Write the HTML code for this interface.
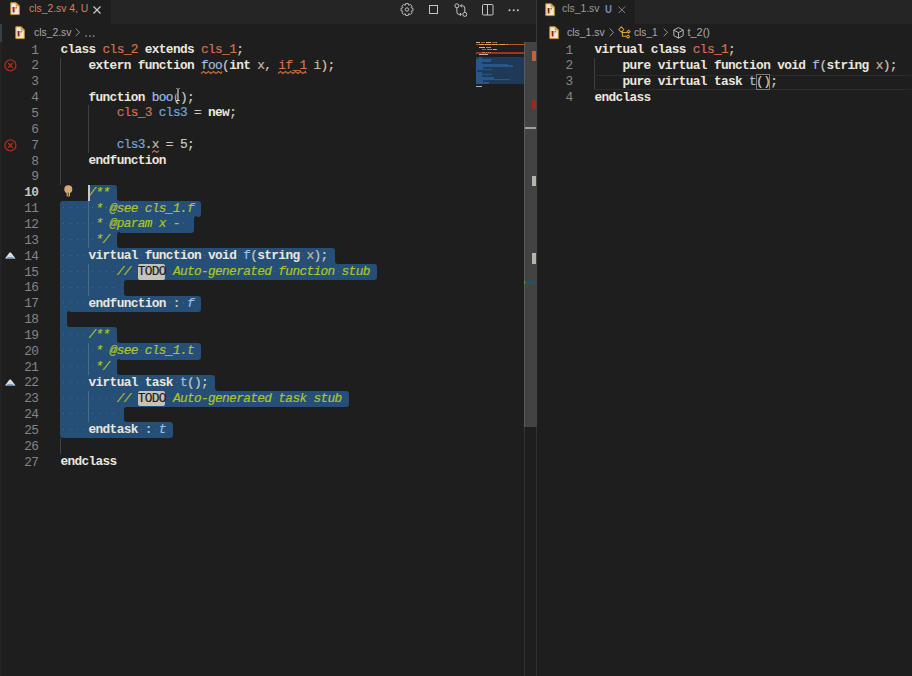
<!DOCTYPE html>
<html><head><meta charset="utf-8">
<style>
*{margin:0;padding:0;box-sizing:border-box}
html,body{width:912px;height:676px;overflow:hidden;background:#1e1e1e}
body{position:relative;font-family:"Liberation Sans",sans-serif}
.abs{position:absolute}
svg{position:absolute;overflow:visible}
.tabbar{position:absolute;top:0;height:23.9px;background:#252526}
.tab{position:absolute;top:0;height:23.9px;background:#1e1e1e}
.ui{position:absolute;transform-origin:0 0;font-family:"Liberation Sans",sans-serif;font-size:10.9px;white-space:pre;line-height:12px}
.code{position:absolute;-webkit-text-stroke:0.2px currentColor;font-family:"Liberation Mono",monospace;font-size:12.8px;letter-spacing:-0.65px;white-space:pre;line-height:15.85px;height:15.85px;color:#d4d4d4}
.ln{position:absolute;font-family:"Liberation Mono",monospace;font-size:12.8px;letter-spacing:-0.65px;line-height:15.85px;text-align:right;color:#858585;width:30px}
.ln.cur{color:#c6c6c6;font-weight:bold}
.ln.rcur{color:#c6c6c6}
.k{font-weight:bold;color:#ece6dc;-webkit-text-stroke:0}
.t{color:#d4704c}
.fn{color:#9cbfe2}
.v{color:#c8b89c}
.id{color:#74a6d8}
.p{color:#cfc8b8}
.c{color:#aec428;font-style:italic}
.fi{color:#9cbfe2;font-style:italic}
.todo{color:#1e1e1e}
.br{color:#cfc8b8}
.sel{position:absolute;background:#264f78}
.guide{position:absolute;width:1px;background:#404040}
.guide.gs{background:#4a6a8c}
.todo-bg{position:absolute;background:#c6c3bd;border-radius:2px}
.ws{position:absolute;width:1px;height:1px;background:#46688e}
</style></head><body>

<!-- LEFT GROUP -->
<div class="tabbar" style="left:0;width:536px"></div>
<div class="tab" style="left:0;width:111px"></div>
<div class="abs" style="left:536px;top:0;width:1px;height:676px;background:#3a3a3a"></div>
<div class="abs" style="left:0;top:23.9px;width:1.6px;height:18.1px;background:#3a3e46"></div>
<div class="abs" style="left:0;top:42px;width:2px;height:634px;background:#232323"></div>

<!-- left tab -->
<svg style="left:10.2px;top:2.3px" width="10" height="13" viewBox="0 0 10 13"><path d="M0.8,0.8 H6.1 L9.3,4.0 V12.6 H0.8 Z" fill="#f4ead4" stroke="#c99035" stroke-width="1"/><path d="M6.1,0.8 V4 H9.3 Z" fill="#dcb060" stroke="#c99035" stroke-width="0.7"/><path d="M2.5,5.1 H4.5 V10.4 H2.8 Z" fill="#8e1d12"/><path d="M5.4,5.3 H7.3 L6.5,6.5 H5.4 Z" fill="#c0392b"/><path d="M6.1,6.5 L4.9,10.2" stroke="#dcc2a4" stroke-width="0.6"/></svg>
<div class="ui" style="left:29px;top:1.5px;color:#d7825a;transform:scaleX(0.95)">cls_2.sv 4, U</div>
<svg style="left:93px;top:5.5px" width="8" height="8" viewBox="0 0 8 8"><path d="M0.5,0.5 L7.5,7.5 M7.5,0.5 L0.5,7.5" stroke="#c9d2da" stroke-width="1.1"/></svg>

<!-- toolbar icons -->
<svg style="left:400px;top:3px" width="14" height="13" viewBox="0 0 14 13"><g fill="none" stroke="#c5c5c5" stroke-width="0.95"><path d="M11.31,4.88 L12.98,5.29 L12.98,7.71 L11.31,8.12 L11.19,8.40 L12.08,9.87 L10.37,11.58 L8.90,10.69 L8.62,10.81 L8.21,12.48 L5.79,12.48 L5.38,10.81 L5.10,10.69 L3.63,11.58 L1.92,9.87 L2.81,8.40 L2.69,8.12 L1.02,7.71 L1.02,5.29 L2.69,4.88 L2.81,4.60 L1.92,3.13 L3.63,1.42 L5.10,2.31 L5.38,2.19 L5.79,0.52 L8.21,0.52 L8.62,2.19 L8.90,2.31 L10.37,1.42 L12.08,3.13 L11.19,4.60 Z"/><circle cx="7" cy="6.5" r="1.7"/></g></svg>
<svg style="left:428px;top:4px" width="11" height="11" viewBox="0 0 11 11"><rect x="1.5" y="1.5" width="8" height="8" fill="none" stroke="#c5c5c5" stroke-width="1"/></svg>
<svg style="left:453.5px;top:2.8px" width="15" height="15" viewBox="0 0 15 15"><g fill="none" stroke="#c5c5c5" stroke-width="1"><circle cx="2.9" cy="2.8" r="2"/><circle cx="10.8" cy="11.4" r="2"/><path d="M2.9,4.8 V9.2 Q2.9,11.4 5.2,11.4 H7.2 M5.9,9.9 L7.4,11.4 L5.9,12.9"/><path d="M10.8,9.4 V5 Q10.8,2.8 8.5,2.8 H6.6 M7.9,1.3 L6.4,2.8 L7.9,4.3"/></g></svg>
<svg style="left:481px;top:2.5px" width="13" height="13" viewBox="0 0 13 13"><g fill="none" stroke="#c5c5c5" stroke-width="1"><rect x="1.5" y="1.5" width="10.5" height="10.5" rx="1"/><path d="M6.5,1.5 V12"/></g></svg>
<svg style="left:508px;top:8.5px" width="12" height="3" viewBox="0 0 12 3"><g fill="#c5c5c5"><circle cx="1.5" cy="1.2" r="1"/><circle cx="5.7" cy="1.2" r="1"/><circle cx="9.9" cy="1.2" r="1"/></g></svg>

<!-- left breadcrumb -->
<svg style="left:15px;top:26px" width="10" height="13" viewBox="0 0 10 13"><path d="M0.8,0.8 H6.1 L9.3,4.0 V12.6 H0.8 Z" fill="#f4ead4" stroke="#c99035" stroke-width="1"/><path d="M6.1,0.8 V4 H9.3 Z" fill="#dcb060" stroke="#c99035" stroke-width="0.7"/><path d="M2.5,5.1 H4.5 V10.4 H2.8 Z" fill="#8e1d12"/><path d="M5.4,5.3 H7.3 L6.5,6.5 H5.4 Z" fill="#c0392b"/><path d="M6.1,6.5 L4.9,10.2" stroke="#dcc2a4" stroke-width="0.6"/></svg>
<div class="ui" style="left:33.5px;top:25.5px;color:#a9a9a9;transform:scaleX(0.95)">cls_2.sv</div>
<svg style="left:75px;top:28.4px" width="6" height="9" viewBox="0 0 6 9"><path d="M0.7,0.6 L4.6,4.3 L0.7,8" fill="none" stroke="#a0a0a0" stroke-width="0.9"/></svg>
<svg style="left:84.5px;top:34.7px" width="11" height="2" viewBox="0 0 11 2"><g fill="#9a9a9a"><circle cx="1.2" cy="1" r="0.85"/><circle cx="4.9" cy="1" r="0.85"/><circle cx="8.6" cy="1" r="0.85"/></g></svg>

<!-- RIGHT GROUP -->
<div class="tabbar" style="left:537px;width:375px"></div>
<div class="tab" style="left:537px;width:97.5px"></div>
<svg style="left:544.5px;top:2.5px" width="10" height="13" viewBox="0 0 10 13"><path d="M0.8,0.8 H6.1 L9.3,4.0 V12.6 H0.8 Z" fill="#f4ead4" stroke="#c99035" stroke-width="1"/><path d="M6.1,0.8 V4 H9.3 Z" fill="#dcb060" stroke="#c99035" stroke-width="0.7"/><path d="M2.5,5.1 H4.5 V10.4 H2.8 Z" fill="#8e1d12"/><path d="M5.4,5.3 H7.3 L6.5,6.5 H5.4 Z" fill="#c0392b"/><path d="M6.1,6.5 L4.9,10.2" stroke="#dcc2a4" stroke-width="0.6"/></svg>
<div class="ui" style="left:562px;top:1.5px;color:#9a9a9a;transform:scaleX(0.95)">cls_1.sv</div>
<div class="ui" style="left:605px;top:3.4px;color:#7390ae;font-weight:bold;transform:scale(0.88,0.96)">U</div>
<svg style="left:618px;top:6px" width="8" height="8" viewBox="0 0 8 8"><path d="M0.6,0.6 L7,7 M7,0.6 L0.6,7" stroke="#8a8a8a" stroke-width="0.95"/></svg>

<!-- right breadcrumb -->
<svg style="left:549px;top:26px" width="10" height="13" viewBox="0 0 10 13"><path d="M0.8,0.8 H6.1 L9.3,4.0 V12.6 H0.8 Z" fill="#f4ead4" stroke="#c99035" stroke-width="1"/><path d="M6.1,0.8 V4 H9.3 Z" fill="#dcb060" stroke="#c99035" stroke-width="0.7"/><path d="M2.5,5.1 H4.5 V10.4 H2.8 Z" fill="#8e1d12"/><path d="M5.4,5.3 H7.3 L6.5,6.5 H5.4 Z" fill="#c0392b"/><path d="M6.1,6.5 L4.9,10.2" stroke="#dcc2a4" stroke-width="0.6"/></svg>
<div class="ui" style="left:567px;top:25.5px;color:#a9a9a9;transform:scaleX(0.96)">cls_1.sv</div>
<svg style="left:609px;top:28.2px" width="6" height="9" viewBox="0 0 6 9"><path d="M0.7,0.6 L4.6,4.4 L0.7,8.2" fill="none" stroke="#a0a0a0" stroke-width="0.9"/></svg>
<svg style="left:618px;top:26px" width="13" height="13" viewBox="0 0 13 13"><g fill="none" stroke="#dca03a" stroke-width="1.05" stroke-linejoin="round"><path d="M3.3,0.9 L5.9,3.5 L3.3,6.1 L0.7,3.5 Z"/><path d="M10.6,4.1 L12.1,5.6 L10.6,7.1 L9.1,5.6 Z"/><path d="M10,9 L11.6,10.6 L10,12.2 L8.4,10.6 Z"/><path d="M4.6,6.5 H9.3 M4.4,5.2 V10.3 H8.4"/></g></svg>
<div class="ui" style="left:633.5px;top:25.5px;color:#a9a9a9;transform:scaleX(0.93)">cls_1</div>
<svg style="left:662.5px;top:28.2px" width="6" height="9" viewBox="0 0 6 9"><path d="M0.7,0.6 L4.6,4.4 L0.7,8.2" fill="none" stroke="#a0a0a0" stroke-width="0.9"/></svg>
<svg style="left:672.5px;top:27px" width="11" height="12" viewBox="0 0 11 12"><g fill="none" stroke="#b4b4b4" stroke-width="1"><path d="M5.5,0.6 L10.2,3 V8.6 L5.5,11.2 L0.8,8.6 V3 Z M0.8,3 L5.5,5.6 L10.2,3 M5.5,5.6 V11.2"/></g></svg>
<div class="ui" style="left:687.5px;top:25.5px;color:#a9a9a9">t_2()</div>


<div class="sel" style="left:88.52px;top:184.65px;width:28.12px;height:16.55px;border-radius:3.0px 3.0px 0px 0px"></div>
<div class="abs" style="left:116.64px;top:197.50px;width:3.0px;height:3.0px;background:#264f78"></div>
<div class="abs" style="left:116.64px;top:197.50px;width:3.0px;height:3.0px;background:#1e1e1e;border-radius:0 0 0 3.0px"></div>
<div class="abs" style="left:85.52px;top:197.50px;width:3.0px;height:3.0px;background:#264f78"></div>
<div class="abs" style="left:85.52px;top:197.50px;width:3.0px;height:3.0px;background:#1e1e1e;border-radius:0 0 3.0px 0"></div>
<div class="sel" style="left:60.40px;top:200.50px;width:140.60px;height:16.55px;border-radius:3.0px 3.0px 3.0px 0px"></div>
<div class="sel" style="left:60.40px;top:216.35px;width:133.57px;height:16.55px;border-radius:0px 0px 3.0px 0px"></div>
<div class="abs" style="left:193.97px;top:216.35px;width:3.0px;height:3.0px;background:#264f78"></div>
<div class="abs" style="left:193.97px;top:216.35px;width:3.0px;height:3.0px;background:#1e1e1e;border-radius:3.0px 0 0 0"></div>
<div class="sel" style="left:60.40px;top:232.20px;width:56.24px;height:16.55px;border-radius:0px 0px 0px 0px"></div>
<div class="abs" style="left:116.64px;top:232.20px;width:3.0px;height:3.0px;background:#264f78"></div>
<div class="abs" style="left:116.64px;top:232.20px;width:3.0px;height:3.0px;background:#1e1e1e;border-radius:3.0px 0 0 0"></div>
<div class="abs" style="left:116.64px;top:245.05px;width:3.0px;height:3.0px;background:#264f78"></div>
<div class="abs" style="left:116.64px;top:245.05px;width:3.0px;height:3.0px;background:#1e1e1e;border-radius:0 0 0 3.0px"></div>
<div class="sel" style="left:60.40px;top:248.05px;width:274.17px;height:16.55px;border-radius:0px 3.0px 0px 0px"></div>
<div class="abs" style="left:334.57px;top:260.90px;width:3.0px;height:3.0px;background:#264f78"></div>
<div class="abs" style="left:334.57px;top:260.90px;width:3.0px;height:3.0px;background:#1e1e1e;border-radius:0 0 0 3.0px"></div>
<div class="sel" style="left:60.40px;top:263.90px;width:316.35px;height:16.55px;border-radius:0px 3.0px 3.0px 0px"></div>
<div class="sel" style="left:60.40px;top:279.75px;width:63.27px;height:16.55px;border-radius:0px 0px 0px 0px"></div>
<div class="abs" style="left:123.67px;top:279.75px;width:3.0px;height:3.0px;background:#264f78"></div>
<div class="abs" style="left:123.67px;top:279.75px;width:3.0px;height:3.0px;background:#1e1e1e;border-radius:3.0px 0 0 0"></div>
<div class="abs" style="left:123.67px;top:292.60px;width:3.0px;height:3.0px;background:#264f78"></div>
<div class="abs" style="left:123.67px;top:292.60px;width:3.0px;height:3.0px;background:#1e1e1e;border-radius:0 0 0 3.0px"></div>
<div class="sel" style="left:60.40px;top:295.60px;width:140.60px;height:16.55px;border-radius:0px 3.0px 3.0px 0px"></div>
<div class="sel" style="left:60.40px;top:311.45px;width:7.03px;height:16.55px;border-radius:0px 0px 0px 0px"></div>
<div class="abs" style="left:67.43px;top:311.45px;width:3.0px;height:3.0px;background:#264f78"></div>
<div class="abs" style="left:67.43px;top:311.45px;width:3.0px;height:3.0px;background:#1e1e1e;border-radius:3.0px 0 0 0"></div>
<div class="abs" style="left:67.43px;top:324.30px;width:3.0px;height:3.0px;background:#264f78"></div>
<div class="abs" style="left:67.43px;top:324.30px;width:3.0px;height:3.0px;background:#1e1e1e;border-radius:0 0 0 3.0px"></div>
<div class="sel" style="left:60.40px;top:327.30px;width:56.24px;height:16.55px;border-radius:0px 3.0px 0px 0px"></div>
<div class="abs" style="left:116.64px;top:340.15px;width:3.0px;height:3.0px;background:#264f78"></div>
<div class="abs" style="left:116.64px;top:340.15px;width:3.0px;height:3.0px;background:#1e1e1e;border-radius:0 0 0 3.0px"></div>
<div class="sel" style="left:60.40px;top:343.15px;width:140.60px;height:16.55px;border-radius:0px 3.0px 3.0px 0px"></div>
<div class="sel" style="left:60.40px;top:359.00px;width:56.24px;height:16.55px;border-radius:0px 0px 0px 0px"></div>
<div class="abs" style="left:116.64px;top:359.00px;width:3.0px;height:3.0px;background:#264f78"></div>
<div class="abs" style="left:116.64px;top:359.00px;width:3.0px;height:3.0px;background:#1e1e1e;border-radius:3.0px 0 0 0"></div>
<div class="abs" style="left:116.64px;top:371.85px;width:3.0px;height:3.0px;background:#264f78"></div>
<div class="abs" style="left:116.64px;top:371.85px;width:3.0px;height:3.0px;background:#1e1e1e;border-radius:0 0 0 3.0px"></div>
<div class="sel" style="left:60.40px;top:374.85px;width:154.66px;height:16.55px;border-radius:0px 3.0px 0px 0px"></div>
<div class="abs" style="left:215.06px;top:387.70px;width:3.0px;height:3.0px;background:#264f78"></div>
<div class="abs" style="left:215.06px;top:387.70px;width:3.0px;height:3.0px;background:#1e1e1e;border-radius:0 0 0 3.0px"></div>
<div class="sel" style="left:60.40px;top:390.70px;width:288.23px;height:16.55px;border-radius:0px 3.0px 3.0px 0px"></div>
<div class="sel" style="left:60.40px;top:406.55px;width:63.27px;height:16.55px;border-radius:0px 0px 0px 0px"></div>
<div class="abs" style="left:123.67px;top:406.55px;width:3.0px;height:3.0px;background:#264f78"></div>
<div class="abs" style="left:123.67px;top:406.55px;width:3.0px;height:3.0px;background:#1e1e1e;border-radius:3.0px 0 0 0"></div>
<div class="abs" style="left:123.67px;top:419.40px;width:3.0px;height:3.0px;background:#264f78"></div>
<div class="abs" style="left:123.67px;top:419.40px;width:3.0px;height:3.0px;background:#1e1e1e;border-radius:0 0 0 3.0px"></div>
<div class="sel" style="left:60.40px;top:422.40px;width:112.48px;height:15.85px;border-radius:0px 3.0px 3.0px 3.0px"></div>
<div class="ws" style="left:63.40px;top:207.30px"></div>
<div class="ws" style="left:70.43px;top:207.30px"></div>
<div class="ws" style="left:77.46px;top:207.30px"></div>
<div class="ws" style="left:84.49px;top:207.30px"></div>
<div class="ws" style="left:91.52px;top:207.30px"></div>
<div class="ws" style="left:105.58px;top:207.30px"></div>
<div class="ws" style="left:140.73px;top:207.30px"></div>
<div class="ws" style="left:63.40px;top:223.15px"></div>
<div class="ws" style="left:70.43px;top:223.15px"></div>
<div class="ws" style="left:77.46px;top:223.15px"></div>
<div class="ws" style="left:84.49px;top:223.15px"></div>
<div class="ws" style="left:91.52px;top:223.15px"></div>
<div class="ws" style="left:105.58px;top:223.15px"></div>
<div class="ws" style="left:154.79px;top:223.15px"></div>
<div class="ws" style="left:168.85px;top:223.15px"></div>
<div class="ws" style="left:182.91px;top:223.15px"></div>
<div class="ws" style="left:63.40px;top:239.00px"></div>
<div class="ws" style="left:70.43px;top:239.00px"></div>
<div class="ws" style="left:77.46px;top:239.00px"></div>
<div class="ws" style="left:84.49px;top:239.00px"></div>
<div class="ws" style="left:91.52px;top:239.00px"></div>
<div class="ws" style="left:63.40px;top:254.85px"></div>
<div class="ws" style="left:70.43px;top:254.85px"></div>
<div class="ws" style="left:77.46px;top:254.85px"></div>
<div class="ws" style="left:84.49px;top:254.85px"></div>
<div class="ws" style="left:140.73px;top:254.85px"></div>
<div class="ws" style="left:204.00px;top:254.85px"></div>
<div class="ws" style="left:239.15px;top:254.85px"></div>
<div class="ws" style="left:302.42px;top:254.85px"></div>
<div class="ws" style="left:63.40px;top:270.70px"></div>
<div class="ws" style="left:70.43px;top:270.70px"></div>
<div class="ws" style="left:77.46px;top:270.70px"></div>
<div class="ws" style="left:84.49px;top:270.70px"></div>
<div class="ws" style="left:91.52px;top:270.70px"></div>
<div class="ws" style="left:98.55px;top:270.70px"></div>
<div class="ws" style="left:105.58px;top:270.70px"></div>
<div class="ws" style="left:112.61px;top:270.70px"></div>
<div class="ws" style="left:133.70px;top:270.70px"></div>
<div class="ws" style="left:168.85px;top:270.70px"></div>
<div class="ws" style="left:274.30px;top:270.70px"></div>
<div class="ws" style="left:337.57px;top:270.70px"></div>
<div class="ws" style="left:63.40px;top:286.55px"></div>
<div class="ws" style="left:70.43px;top:286.55px"></div>
<div class="ws" style="left:77.46px;top:286.55px"></div>
<div class="ws" style="left:84.49px;top:286.55px"></div>
<div class="ws" style="left:91.52px;top:286.55px"></div>
<div class="ws" style="left:98.55px;top:286.55px"></div>
<div class="ws" style="left:105.58px;top:286.55px"></div>
<div class="ws" style="left:112.61px;top:286.55px"></div>
<div class="ws" style="left:63.40px;top:302.40px"></div>
<div class="ws" style="left:70.43px;top:302.40px"></div>
<div class="ws" style="left:77.46px;top:302.40px"></div>
<div class="ws" style="left:84.49px;top:302.40px"></div>
<div class="ws" style="left:168.85px;top:302.40px"></div>
<div class="ws" style="left:182.91px;top:302.40px"></div>
<div class="ws" style="left:63.40px;top:334.10px"></div>
<div class="ws" style="left:70.43px;top:334.10px"></div>
<div class="ws" style="left:77.46px;top:334.10px"></div>
<div class="ws" style="left:84.49px;top:334.10px"></div>
<div class="ws" style="left:63.40px;top:349.95px"></div>
<div class="ws" style="left:70.43px;top:349.95px"></div>
<div class="ws" style="left:77.46px;top:349.95px"></div>
<div class="ws" style="left:84.49px;top:349.95px"></div>
<div class="ws" style="left:91.52px;top:349.95px"></div>
<div class="ws" style="left:105.58px;top:349.95px"></div>
<div class="ws" style="left:140.73px;top:349.95px"></div>
<div class="ws" style="left:63.40px;top:365.80px"></div>
<div class="ws" style="left:70.43px;top:365.80px"></div>
<div class="ws" style="left:77.46px;top:365.80px"></div>
<div class="ws" style="left:84.49px;top:365.80px"></div>
<div class="ws" style="left:91.52px;top:365.80px"></div>
<div class="ws" style="left:63.40px;top:381.65px"></div>
<div class="ws" style="left:70.43px;top:381.65px"></div>
<div class="ws" style="left:77.46px;top:381.65px"></div>
<div class="ws" style="left:84.49px;top:381.65px"></div>
<div class="ws" style="left:140.73px;top:381.65px"></div>
<div class="ws" style="left:175.88px;top:381.65px"></div>
<div class="ws" style="left:63.40px;top:397.50px"></div>
<div class="ws" style="left:70.43px;top:397.50px"></div>
<div class="ws" style="left:77.46px;top:397.50px"></div>
<div class="ws" style="left:84.49px;top:397.50px"></div>
<div class="ws" style="left:91.52px;top:397.50px"></div>
<div class="ws" style="left:98.55px;top:397.50px"></div>
<div class="ws" style="left:105.58px;top:397.50px"></div>
<div class="ws" style="left:112.61px;top:397.50px"></div>
<div class="ws" style="left:133.70px;top:397.50px"></div>
<div class="ws" style="left:168.85px;top:397.50px"></div>
<div class="ws" style="left:274.30px;top:397.50px"></div>
<div class="ws" style="left:309.45px;top:397.50px"></div>
<div class="ws" style="left:63.40px;top:413.35px"></div>
<div class="ws" style="left:70.43px;top:413.35px"></div>
<div class="ws" style="left:77.46px;top:413.35px"></div>
<div class="ws" style="left:84.49px;top:413.35px"></div>
<div class="ws" style="left:91.52px;top:413.35px"></div>
<div class="ws" style="left:98.55px;top:413.35px"></div>
<div class="ws" style="left:105.58px;top:413.35px"></div>
<div class="ws" style="left:112.61px;top:413.35px"></div>
<div class="ws" style="left:63.40px;top:429.20px"></div>
<div class="ws" style="left:70.43px;top:429.20px"></div>
<div class="ws" style="left:77.46px;top:429.20px"></div>
<div class="ws" style="left:84.49px;top:429.20px"></div>
<div class="ws" style="left:140.73px;top:429.20px"></div>
<div class="ws" style="left:154.79px;top:429.20px"></div>
<div class="guide g" style="left:60.00px;top:57.85px;height:126.80px"></div>
<div class="guide g" style="left:60.00px;top:438.25px;height:15.85px"></div>
<div class="guide g" style="left:88.12px;top:105.40px;height:47.55px"></div>
<div class="guide gs" style="left:88.12px;top:200.50px;height:47.55px"></div>
<div class="guide gs" style="left:88.12px;top:263.90px;height:31.70px"></div>
<div class="guide gs" style="left:88.12px;top:343.15px;height:31.70px"></div>
<div class="guide gs" style="left:88.12px;top:390.70px;height:31.70px"></div>
<div class="guide" style="left:593.90px;top:57.85px;height:31.70px"></div>
<div class="todo-bg" style="left:137.53px;top:264.20px;width:27.52px;height:15.45px"></div>
<div class="todo-bg" style="left:137.53px;top:391.00px;width:27.52px;height:15.45px"></div>
<div class="ln" style="left:8.4px;top:42.60px">1</div>
<div class="ln" style="left:8.4px;top:58.45px">2</div>
<div class="ln" style="left:8.4px;top:74.30px">3</div>
<div class="ln" style="left:8.4px;top:90.15px">4</div>
<div class="ln" style="left:8.4px;top:106.00px">5</div>
<div class="ln" style="left:8.4px;top:121.85px">6</div>
<div class="ln" style="left:8.4px;top:137.70px">7</div>
<div class="ln" style="left:8.4px;top:153.55px">8</div>
<div class="ln" style="left:8.4px;top:169.40px">9</div>
<div class="ln cur" style="left:8.4px;top:185.25px">10</div>
<div class="ln" style="left:8.4px;top:201.10px">11</div>
<div class="ln" style="left:8.4px;top:216.95px">12</div>
<div class="ln" style="left:8.4px;top:232.80px">13</div>
<div class="ln" style="left:8.4px;top:248.65px">14</div>
<div class="ln" style="left:8.4px;top:264.50px">15</div>
<div class="ln" style="left:8.4px;top:280.35px">16</div>
<div class="ln" style="left:8.4px;top:296.20px">17</div>
<div class="ln" style="left:8.4px;top:312.05px">18</div>
<div class="ln" style="left:8.4px;top:327.90px">19</div>
<div class="ln" style="left:8.4px;top:343.75px">20</div>
<div class="ln" style="left:8.4px;top:359.60px">21</div>
<div class="ln" style="left:8.4px;top:375.45px">22</div>
<div class="ln" style="left:8.4px;top:391.30px">23</div>
<div class="ln" style="left:8.4px;top:407.15px">24</div>
<div class="ln" style="left:8.4px;top:423.00px">25</div>
<div class="ln" style="left:8.4px;top:438.85px">26</div>
<div class="ln" style="left:8.4px;top:454.70px">27</div>
<div class="code" style="left:60.4px;top:42.00px"><span class="k">class</span> <span class="t">cls_2</span> <span class="k">extends</span> <span class="t">cls_1</span><span class="p">;</span></div>
<div class="code" style="left:60.4px;top:57.85px">    <span class="k">extern</span> <span class="k">function</span> <span class="fn">foo</span><span class="p">(</span><span class="k">int</span> <span class="v">x</span><span class="p">,</span> <span class="t">if_1</span> <span class="v">i</span><span class="p">);</span></div>
<div class="code" style="left:60.4px;top:89.55px">    <span class="k">function</span> <span class="fn">boo</span><span class="p">();</span></div>
<div class="code" style="left:60.4px;top:105.40px">        <span class="t">cls_3</span> <span class="id">cls3</span> <span class="p">=</span> <span class="k">new</span><span class="p">;</span></div>
<div class="code" style="left:60.4px;top:137.10px">        <span class="id">cls3</span><span class="p">.</span><span class="v">x</span> <span class="p">=</span> <span class="p">5;</span></div>
<div class="code" style="left:60.4px;top:152.95px">    <span class="k">endfunction</span></div>
<div class="code" style="left:60.4px;top:184.65px">    <span class="c">/**</span></div>
<div class="code" style="left:60.4px;top:200.50px">     <span class="c">* @see cls_1.f</span></div>
<div class="code" style="left:60.4px;top:216.35px">     <span class="c">* @param x - </span></div>
<div class="code" style="left:60.4px;top:232.20px">     <span class="c">*/</span></div>
<div class="code" style="left:60.4px;top:248.05px">    <span class="k">virtual</span> <span class="k">function</span> <span class="k">void</span> <span class="fn">f</span><span class="p">(</span><span class="k">string</span> <span class="v">x</span><span class="p">);</span></div>
<div class="code" style="left:60.4px;top:263.90px">        <span class="c">// </span><span class="todo">TODO</span><span class="c"> Auto-generated function stub</span></div>
<div class="code" style="left:60.4px;top:279.75px">        </div>
<div class="code" style="left:60.4px;top:295.60px">    <span class="k">endfunction</span><span class="p"> : </span><span class="fi">f</span></div>
<div class="code" style="left:60.4px;top:327.30px">    <span class="c">/**</span></div>
<div class="code" style="left:60.4px;top:343.15px">     <span class="c">* @see cls_1.t</span></div>
<div class="code" style="left:60.4px;top:359.00px">     <span class="c">*/</span></div>
<div class="code" style="left:60.4px;top:374.85px">    <span class="k">virtual</span> <span class="k">task</span> <span class="fn">t</span><span class="p">();</span></div>
<div class="code" style="left:60.4px;top:390.70px">        <span class="c">// </span><span class="todo">TODO</span><span class="c"> Auto-generated task stub</span></div>
<div class="code" style="left:60.4px;top:406.55px">        </div>
<div class="code" style="left:60.4px;top:422.40px">    <span class="k">endtask</span><span class="p"> : </span><span class="fi">t</span></div>
<div class="code" style="left:60.4px;top:454.10px"><span class="k">endclass</span></div>
<svg style="left:201.00px;top:70.75px" width="21.09" height="3" viewBox="0 0 21.09 3"><path d="M0,2.5 L2.50,0.5 L5.00,2.5 L7.50,0.5 L10.00,2.5 L12.50,0.5 L15.00,2.5 L17.50,0.5 L20.00,2.5 L21.09,0.5" fill="none" stroke="#c86c44" stroke-width="1.05"/></svg>
<svg style="left:278.33px;top:70.75px" width="28.12" height="3" viewBox="0 0 28.12 3"><path d="M0,2.5 L2.50,0.5 L5.00,2.5 L7.50,0.5 L10.00,2.5 L12.50,0.5 L15.00,2.5 L17.50,0.5 L20.00,2.5 L22.50,0.5 L25.00,2.5 L27.50,0.5 L28.12,2.5" fill="none" stroke="#c86c44" stroke-width="1.05"/></svg>
<svg style="left:151.79px;top:150.00px" width="7.03" height="3" viewBox="0 0 7.03 3"><path d="M0,2.5 L2.50,0.5 L5.00,2.5 L7.03,0.5" fill="none" stroke="#c86c44" stroke-width="1.05"/></svg>
<svg style="left:3.55px;top:59.45px" width="13" height="13" viewBox="0 0 13 13"><circle cx="6.4" cy="6.4" r="5.5" fill="none" stroke="#aa2e1e" stroke-width="1.3"/><path d="M4.1,4.1 L8.7,8.7 M8.7,4.1 L4.1,8.7" stroke="#aa2e1e" stroke-width="1.4"/></svg>
<svg style="left:3.55px;top:138.70px" width="13" height="13" viewBox="0 0 13 13"><circle cx="6.4" cy="6.4" r="5.5" fill="none" stroke="#aa2e1e" stroke-width="1.3"/><path d="M4.1,4.1 L8.7,8.7 M8.7,4.1 L4.1,8.7" stroke="#aa2e1e" stroke-width="1.4"/></svg>
<svg style="left:4.5px;top:252.15px" width="11" height="7" viewBox="0 0 11 7"><path d="M4.6,0.5 H5.8 L10.5,6.4 H0 Z" fill="#dde7ef"/><path d="M2.2,5.4 H8.2" stroke="#5b8fd0" stroke-width="0.9"/><path d="M4.5,3.4 H6" stroke="#8fb2dc" stroke-width="0.6"/></svg>
<svg style="left:4.5px;top:378.95px" width="11" height="7" viewBox="0 0 11 7"><path d="M4.6,0.5 H5.8 L10.5,6.4 H0 Z" fill="#dde7ef"/><path d="M2.2,5.4 H8.2" stroke="#5b8fd0" stroke-width="0.9"/><path d="M4.5,3.4 H6" stroke="#8fb2dc" stroke-width="0.6"/></svg>
<svg style="left:63.5px;top:185.25px" width="9" height="12" viewBox="0 0 9 12"><circle cx="4.3" cy="4.3" r="4" fill="#d4aa78"/><rect x="2.6" y="7" width="3.4" height="4.6" rx="0.8" fill="#d4aa78"/><path d="M4.3,7.5 V11.2" stroke="#3a3020" stroke-width="0.8"/></svg>
<div class="abs" style="left:88.3px;top:184.85px;width:1.8px;height:15.85px;background:#c8c8c8"></div>
<div class="abs" style="left:175.8px;top:87.6px;width:4.4px;height:13.6px"><div class="abs" style="left:0;top:0;width:4.4px;height:1.6px;background:#d6d6d6;border-radius:1px"></div><div class="abs" style="left:1.2px;top:1.2px;width:2px;height:11.2px;background:#8a8a8a;box-shadow:0 0 0 0.6px #111"></div><div class="abs" style="left:0;top:12px;width:4.4px;height:1.6px;background:#d6d6d6;border-radius:1px"></div></div>
<div class="abs" style="left:593.90px;top:74.60px;width:317.60px;height:15.25px;border-top:1px solid #2c2c2c;border-bottom:1px solid #2c2c2c"></div>
<div class="ln" style="left:542.6px;top:42.60px">1</div>
<div class="ln" style="left:542.6px;top:58.45px">2</div>
<div class="ln" style="left:542.6px;top:74.30px">3</div>
<div class="ln" style="left:542.6px;top:90.15px">4</div>
<div class="abs" style="left:756.09px;top:73.80px;width:14.06px;height:15.85px;border:1px solid #7c7c7c;background:#171717"></div>
<div class="code" style="left:594.4px;top:42.00px"><span class="k">virtual</span> <span class="k">class</span> <span class="t">cls_1</span><span class="p">;</span></div>
<div class="code" style="left:594.4px;top:57.85px">    <span class="k">pure</span> <span class="k">virtual</span> <span class="k">function</span> <span class="k">void</span> <span class="fn">f</span><span class="p">(</span><span class="k">string</span> <span class="v">x</span><span class="p">);</span></div>
<div class="code" style="left:594.4px;top:73.70px">    <span class="k">pure</span> <span class="k">virtual</span> <span class="k">task</span> <span class="fn">t</span><span class="br">(</span><span class="br">)</span><span class="p">;</span></div>
<div class="code" style="left:594.4px;top:89.55px"><span class="k">endclass</span></div>
<div class="abs" style="left:475.50px;top:43.67px;width:48.50px;height:1.67px;background:#b8541e"></div>
<div class="abs" style="left:475.50px;top:52.02px;width:48.50px;height:1.67px;background:#a0321e"></div>
<div class="abs" style="left:475.50px;top:57.03px;width:48.50px;height:26.72px;background:#1e3a58"></div>
<div class="abs" style="left:478.84px;top:57.03px;width:3.34px;height:1.67px;background:#29568a"></div>
<div class="abs" style="left:475.50px;top:58.70px;width:16.68px;height:1.67px;background:#29568a"></div>
<div class="abs" style="left:475.50px;top:60.37px;width:15.85px;height:1.67px;background:#29568a"></div>
<div class="abs" style="left:475.50px;top:62.04px;width:6.67px;height:1.67px;background:#29568a"></div>
<div class="abs" style="left:475.50px;top:63.71px;width:32.53px;height:1.67px;background:#29568a"></div>
<div class="abs" style="left:475.50px;top:65.38px;width:37.53px;height:1.67px;background:#29568a"></div>
<div class="abs" style="left:475.50px;top:67.05px;width:7.51px;height:1.67px;background:#29568a"></div>
<div class="abs" style="left:475.50px;top:68.72px;width:16.68px;height:1.67px;background:#29568a"></div>
<div class="abs" style="left:475.50px;top:70.39px;width:0.83px;height:1.67px;background:#29568a"></div>
<div class="abs" style="left:475.50px;top:72.06px;width:6.67px;height:1.67px;background:#29568a"></div>
<div class="abs" style="left:475.50px;top:73.73px;width:16.68px;height:1.67px;background:#29568a"></div>
<div class="abs" style="left:475.50px;top:75.40px;width:6.67px;height:1.67px;background:#29568a"></div>
<div class="abs" style="left:475.50px;top:77.07px;width:18.35px;height:1.67px;background:#29568a"></div>
<div class="abs" style="left:475.50px;top:78.74px;width:34.19px;height:1.67px;background:#29568a"></div>
<div class="abs" style="left:475.50px;top:80.41px;width:7.51px;height:1.67px;background:#29568a"></div>
<div class="abs" style="left:475.50px;top:82.08px;width:13.34px;height:1.67px;background:#29568a"></div>
<div class="abs" style="left:475.50px;top:42.20px;width:4.17px;height:1.27px;background:#b8b2a8"></div>
<div class="abs" style="left:480.50px;top:42.20px;width:4.17px;height:1.27px;background:#b05a3a"></div>
<div class="abs" style="left:485.51px;top:42.20px;width:5.84px;height:1.27px;background:#b8b2a8"></div>
<div class="abs" style="left:492.18px;top:42.20px;width:4.17px;height:1.27px;background:#b05a3a"></div>
<div class="abs" style="left:496.35px;top:42.20px;width:0.83px;height:1.27px;background:#9a9a9a"></div>
<div class="abs" style="left:478.84px;top:43.87px;width:5.00px;height:1.27px;background:#e8a040"></div>
<div class="abs" style="left:484.67px;top:43.87px;width:6.67px;height:1.27px;background:#e8a040"></div>
<div class="abs" style="left:492.18px;top:43.87px;width:2.50px;height:1.27px;background:#e8a040"></div>
<div class="abs" style="left:494.68px;top:43.87px;width:0.83px;height:1.27px;background:#d88a40"></div>
<div class="abs" style="left:495.52px;top:43.87px;width:2.50px;height:1.27px;background:#e8a040"></div>
<div class="abs" style="left:498.85px;top:43.87px;width:0.83px;height:1.27px;background:#d88a40"></div>
<div class="abs" style="left:499.69px;top:43.87px;width:0.83px;height:1.27px;background:#d88a40"></div>
<div class="abs" style="left:501.35px;top:43.87px;width:3.34px;height:1.27px;background:#e8a040"></div>
<div class="abs" style="left:505.52px;top:43.87px;width:0.83px;height:1.27px;background:#d88a40"></div>
<div class="abs" style="left:506.36px;top:43.87px;width:1.67px;height:1.27px;background:#d88a40"></div>
<div class="abs" style="left:478.84px;top:47.21px;width:6.67px;height:1.27px;background:#b8b2a8"></div>
<div class="abs" style="left:486.34px;top:47.21px;width:2.50px;height:1.27px;background:#7d93a8"></div>
<div class="abs" style="left:488.84px;top:47.21px;width:2.50px;height:1.27px;background:#9a9a9a"></div>
<div class="abs" style="left:482.17px;top:48.88px;width:4.17px;height:1.27px;background:#b05a3a"></div>
<div class="abs" style="left:487.18px;top:48.88px;width:3.34px;height:1.27px;background:#6a8eb0"></div>
<div class="abs" style="left:491.35px;top:48.88px;width:0.83px;height:1.27px;background:#9a9a9a"></div>
<div class="abs" style="left:493.01px;top:48.88px;width:2.50px;height:1.27px;background:#b8b2a8"></div>
<div class="abs" style="left:495.52px;top:48.88px;width:0.83px;height:1.27px;background:#9a9a9a"></div>
<div class="abs" style="left:482.17px;top:52.22px;width:3.34px;height:1.27px;background:#d08050"></div>
<div class="abs" style="left:485.51px;top:52.22px;width:0.83px;height:1.27px;background:#d08050"></div>
<div class="abs" style="left:486.34px;top:52.22px;width:0.83px;height:1.27px;background:#d08050"></div>
<div class="abs" style="left:488.01px;top:52.22px;width:0.83px;height:1.27px;background:#d08050"></div>
<div class="abs" style="left:489.68px;top:52.22px;width:1.67px;height:1.27px;background:#d08050"></div>
<div class="abs" style="left:478.84px;top:53.89px;width:9.17px;height:1.27px;background:#b8b2a8"></div>
<div class="abs" style="left:475.50px;top:85.62px;width:6.67px;height:1.27px;background:#b8b2a8"></div>
<div class="abs" style="left:524px;top:42px;width:1px;height:634px;background:#36312f"></div>
<div class="abs" style="left:535.6px;top:42px;width:1px;height:634px;background:#303030"></div>
<div class="abs" style="left:524.2px;top:42px;width:12.5px;height:384.5px;background:#434343"></div>
<div class="abs" style="left:523.8px;top:42px;width:1px;height:384.5px;background:#5a5a5a"></div>
<div class="abs" style="left:532.1px;top:51.4px;width:3.9px;height:10px;background:#c8603a"></div>
<div class="abs" style="left:532.4px;top:99.8px;width:3.4px;height:9px;background:#9c2a18"></div>
<div class="abs" style="left:524.5px;top:127.4px;width:11.4px;height:1.7px;background:#9a9e9e"></div>
<div class="abs" style="left:532.1px;top:176.4px;width:3.9px;height:10px;background:#b8b4aa"></div>
<div class="abs" style="left:532.1px;top:253.2px;width:3.9px;height:10.5px;background:#b8b4aa"></div>
<div class="abs" style="left:524.2px;top:281px;width:12px;height:3.4px;background:#264f78"></div>
<div class="abs" style="left:524px;top:281px;width:1px;height:3.4px;background:#5a9a3a"></div>
</body></html>
